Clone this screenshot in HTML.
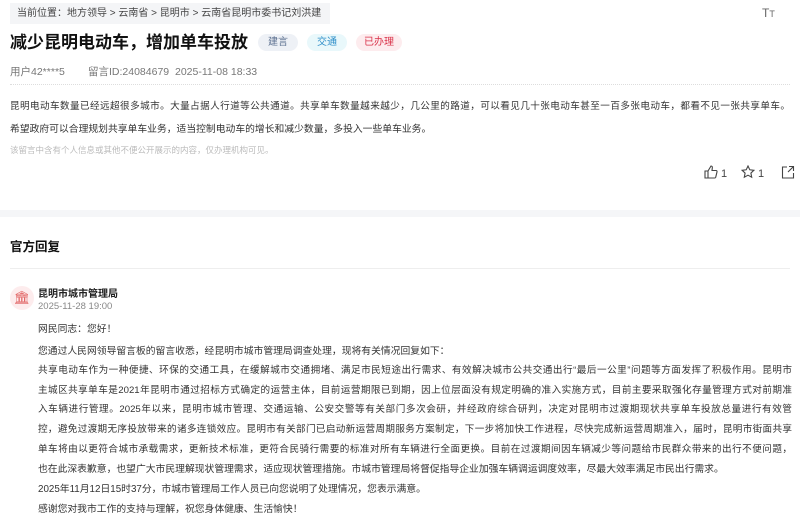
<!DOCTYPE html>
<html><head><meta charset="utf-8"><style>
*{margin:0;padding:0;box-sizing:border-box}
body{width:800px;height:518px;overflow:hidden;background:#fff;font-family:"Liberation Sans","Noto Sans CJK SC",sans-serif;color:#333;position:relative}
.a{position:absolute;white-space:nowrap}
.crumb{left:10px;top:3px;width:320px;height:21px;background:#f4f5f7;font-size:10px;color:#444;line-height:21px;padding-left:7px}
.title{left:10px;top:31px;font-size:17px;font-weight:bold;color:#111;line-height:24px}
.tag{top:34px;height:17px;line-height:17px;font-size:10px;text-align:center;border-radius:9px}
.meta{top:65px;font-size:10.5px;color:#777;line-height:14px}
.j{position:absolute;white-space:normal;height:16px;overflow:hidden;text-align:justify;text-align-last:justify;font-size:9.6px;line-height:16px;color:#333}
.body{left:10px;width:780px}
.r{left:38px;width:754px}
.s{position:absolute;white-space:nowrap;font-size:9.8px;line-height:16px;color:#333;left:38px}
</style></head><body>
<div class="a crumb">当前位置：地方领导 &gt; 云南省 &gt; 昆明市 &gt; 云南省昆明市委书记刘洪建</div>
<div class="a" style="left:762px;top:6px;font-size:12px;color:#666">T<span style="font-size:9px">T</span></div>
<div class="a title">减少昆明电动车，增加单车投放</div>
<div class="a tag" style="left:258px;width:40px;background:#eef1f6;color:#5a6f8f">建言</div>
<div class="a tag" style="left:307px;width:40px;background:#e9f8fb;color:#2f8fc9">交通</div>
<div class="a tag" style="left:356px;width:46px;background:#fdecee;color:#d9334a">已办理</div>
<div class="a meta" style="left:10px">用户42****5</div>
<div class="a meta" style="left:88px">留言ID:24084679</div>
<div class="a meta" style="left:175px">2025-11-08 18:33</div>
<div class="a" style="left:10px;top:84px;width:780px;border-top:1px dotted #ddd"></div>
<div class="j body" style="top:99px">昆明电动车数量已经远超很多城市。大量占据人行道等公共通道。共享单车数量越来越少，几公里的路道，可以看见几十张电动车甚至一百多张电动车，都看不见一张共享单车。</div>
<div class="s" style="left:10px;top:122px">希望政府可以合理规划共享单车业务，适当控制电动车的增长和减少数量，多投入一些单车业务。</div>
<div class="a" style="left:10px;top:144px;font-size:8.5px;color:#bbb">该留言中含有个人信息或其他不便公开展示的内容，仅办理机构可见。</div>
<div class="a" style="left:704px;top:165px;font-size:11px;color:#444">
<svg width="14" height="14" viewBox="0 0 14 14" style="vertical-align:-2px" fill="none" stroke="#444" stroke-width="1.1"><path d="M1 6h3v7H1zM4 6l3-5c1.2 0 1.5 1 1.3 2L8 5.5h4c.8 0 1.2.7 1 1.4l-1.3 5.4c-.2.5-.6.7-1 .7H4"/></svg> 1</div>
<div class="a" style="left:741px;top:165px;font-size:11px;color:#444">
<svg width="14" height="14" viewBox="0 0 14 14" style="vertical-align:-2px" fill="none" stroke="#444" stroke-width="1.1"><path d="M7 1l1.8 3.8 4.1.5-3 2.8.8 4.1L7 10.2 3.3 12.2l.8-4.1-3-2.8 4.1-.5z"/></svg> 1</div>
<div class="a" style="left:781px;top:165px">
<svg width="14" height="14" viewBox="0 0 14 14" fill="none" stroke="#444" stroke-width="1.1"><path d="M6 2H1.5v11h11V8M8 1.5h4.5V6M12.5 1.5L7 7"/></svg></div>
<div class="a" style="left:0;top:210px;width:800px;height:7px;background:#f5f6f8"></div>
<div class="a" style="left:10px;top:236px;font-size:12.5px;font-weight:bold;color:#111">官方回复</div>
<div class="a" style="left:10px;top:268px;width:780px;border-top:1px solid #eee"></div>
<div class="a" style="left:10px;top:286px;width:24px;height:24px;border-radius:50%;background:#fdeced;color:#e06060;font-size:13px;text-align:center;line-height:24px">&#x1F3DB;&#xFE0E;</div>
<div class="a" style="left:38px;top:285px;font-size:10px;font-weight:bold;color:#222">昆明市城市管理局</div>
<div class="a" style="left:38px;top:301px;font-size:9.5px;color:#888">2025-11-28 19:00</div>
<div class="s" style="top:322px">网民同志：您好！</div>
<div class="s" style="top:344px">您通过人民网领导留言板的留言收悉，经昆明市城市管理局调查处理，现将有关情况回复如下：</div>
<div class="j r" style="top:363px">共享电动车作为一种便捷、环保的交通工具，在缓解城市交通拥堵、满足市民短途出行需求、有效解决城市公共交通出行“最后一公里”问题等方面发挥了积极作用。昆明市</div>
<div class="j r" style="top:383px">主城区共享单车是2021年昆明市通过招标方式确定的运营主体，目前运营期限已到期，因上位层面没有规定明确的准入实施方式，目前主要采取强化存量管理方式对前期准</div>
<div class="j r" style="top:402px">入车辆进行管理。2025年以来，昆明市城市管理、交通运输、公安交警等有关部门多次会研，并经政府综合研判，决定对昆明市过渡期现状共享单车投放总量进行有效管</div>
<div class="j r" style="top:422px">控，避免过渡期无序投放带来的诸多连锁效应。昆明市有关部门已启动新运营周期服务方案制定，下一步将加快工作进程，尽快完成新运营周期准入，届时，昆明市街面共享</div>
<div class="j r" style="top:442px">单车将由以更符合城市承载需求，更新技术标准，更符合民骑行需要的标准对所有车辆进行全面更换。目前在过渡期间因车辆减少等问题给市民群众带来的出行不便问题，</div>
<div class="s" style="top:462px">也在此深表歉意，也望广大市民理解现状管理需求，适应现状管理措施。市城市管理局将督促指导企业加强车辆调运调度效率，尽最大效率满足市民出行需求。</div>
<div class="s" style="top:482px">2025年11月12日15时37分，市城市管理局工作人员已向您说明了处理情况，您表示满意。</div>
<div class="s" style="top:502px">感谢您对我市工作的支持与理解，祝您身体健康、生活愉快！</div>
</body></html>
